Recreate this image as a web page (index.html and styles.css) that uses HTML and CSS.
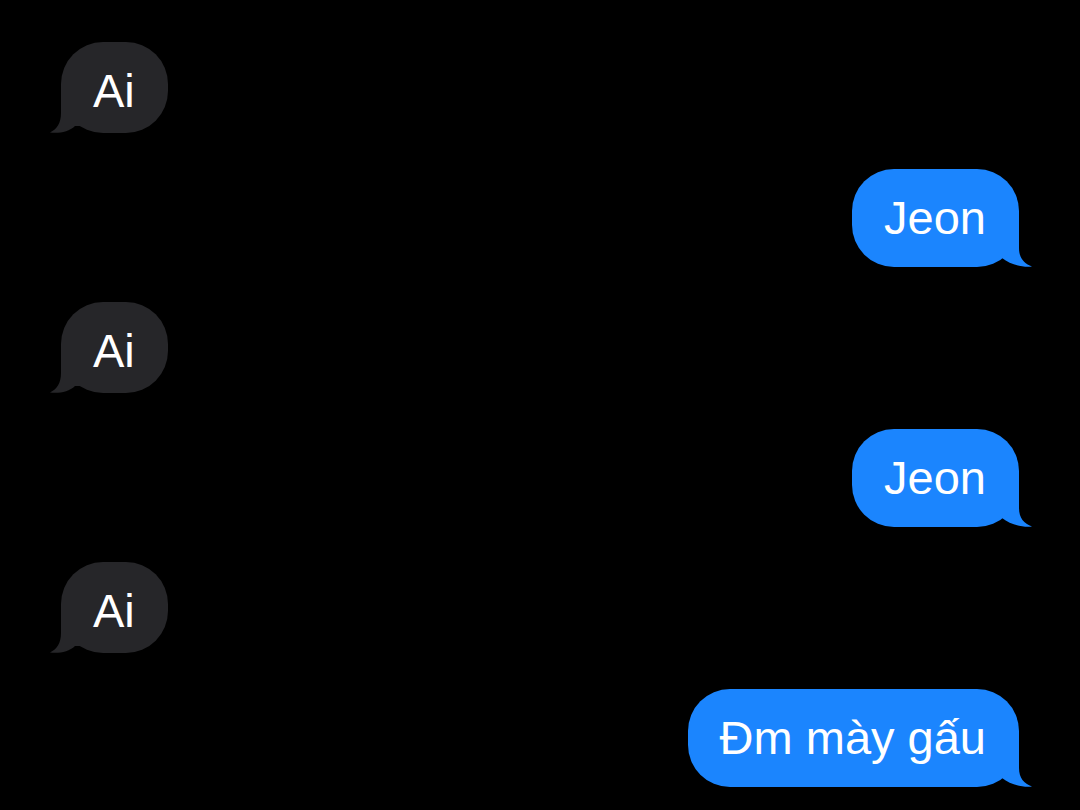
FILE: index.html
```html
<!DOCTYPE html>
<html lang="vi">
<head>
<meta charset="utf-8">
<title>Messages</title>
<link rel="stylesheet" href="styles.css">
</head>
<body>
<main class="thread">
  <div class="bubble recv">Ai<svg class="tail" width="38" height="46" viewBox="0 0 38 46"><path d="M27 0 L27 26 C27 36 31 42 38 45.5 C29 46.5 19 45 13 39 L0 39 L0 0 Z"/></svg></div>
  <div class="bubble sent">Jeon<svg class="tail" width="40" height="46" viewBox="0 0 40 46"><path d="M27 0 L27 27 C27 37 32 42.5 40 45.5 C31 46.5 19 44 10 37 L0 37 L0 0 Z"/></svg></div>
  <div class="bubble recv">Ai<svg class="tail" width="38" height="46" viewBox="0 0 38 46"><path d="M27 0 L27 26 C27 36 31 42 38 45.5 C29 46.5 19 45 13 39 L0 39 L0 0 Z"/></svg></div>
  <div class="bubble sent">Jeon<svg class="tail" width="40" height="46" viewBox="0 0 40 46"><path d="M27 0 L27 27 C27 37 32 42.5 40 45.5 C31 46.5 19 44 10 37 L0 37 L0 0 Z"/></svg></div>
  <div class="bubble recv">Ai<svg class="tail" width="38" height="46" viewBox="0 0 38 46"><path d="M27 0 L27 26 C27 36 31 42 38 45.5 C29 46.5 19 45 13 39 L0 39 L0 0 Z"/></svg></div>
  <div class="bubble sent">Đm mày gấu<svg class="tail" width="40" height="46" viewBox="0 0 40 46"><path d="M27 0 L27 27 C27 37 32 42.5 40 45.5 C31 46.5 19 44 10 37 L0 37 L0 0 Z"/></svg></div>
</main>
</body>
</html>
```
FILE: styles.css
```css
html, body {
  margin: 0;
  padding: 0;
  background: #000;
}

body {
  width: 1080px;
  height: 810px;
  overflow: hidden;
  font-family: "Liberation Sans", Arial, sans-serif;
}

.thread {
  display: flex;
  flex-direction: column;
  gap: 35.5px;
  padding: 42px 61px 0;
}

.bubble {
  position: relative;
  display: inline-flex;
  align-items: center;
  box-sizing: border-box;
  padding: 0 33px 0 32px;
  border-radius: 42px;
  color: #fff;
  font-size: 47px;
  line-height: 1;
  white-space: nowrap;
}

.bubble.recv {
  align-self: flex-start;
  height: 91px;
  padding-top: 6px;
  background: #262629;
}

.bubble.sent {
  align-self: flex-end;
  height: 98px;
  background: #1b85fe;
}

.tail {
  position: absolute;
  bottom: 0;
  display: block;
}

.recv .tail {
  left: -11px;
  transform: scaleX(-1);
  fill: #262629;
}

.sent .tail {
  right: -13px;
  fill: #1b85fe;
}
```
